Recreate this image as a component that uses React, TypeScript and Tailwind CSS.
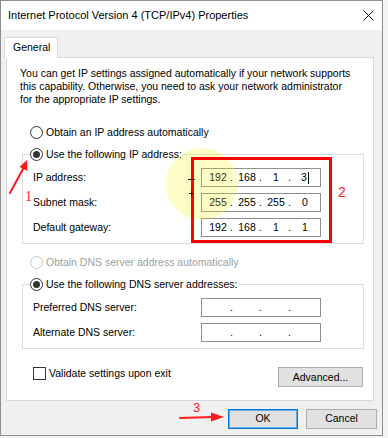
import React from "react";

const FONT = { fontFamily: '"Liberation Sans", Arial, sans-serif' };

function Radio({ checked, disabled }: { checked?: boolean; disabled?: boolean }) {
  return (
    <span
      className={
        disabled
          ? "w-[13px] h-[13px] rounded-full border border-[#c6c6c6] bg-white flex items-center justify-center shrink-0"
          : "w-[13px] h-[13px] rounded-full border border-[#333333] bg-white flex items-center justify-center shrink-0"
      }
    >
      {checked && <span className="w-[7px] h-[7px] rounded-full bg-[#333333]" />}
    </span>
  );
}

function IpField({ parts, cursor }: { parts: string[]; cursor?: boolean }) {
  return (
    <div className="w-[120px] h-[19px] border border-[#8f8f8f] bg-white flex items-center pl-[4px] text-[10.5px] leading-[13px] text-black shrink-0">
      {[0, 1, 2, 3].map((i) => (
        <React.Fragment key={i}>
          <span className="w-[24px] text-center flex justify-center items-center">
            <span>{parts[i] ?? ""}</span>
            {cursor && i === 3 && <span className="inline-block w-px h-[12px] bg-black ml-px" />}
          </span>
          {i < 3 && <span className="w-[5px] text-left">.</span>}
        </React.Fragment>
      ))}
    </div>
  );
}

function Row({ label, children }: { label: string; children: React.ReactNode }) {
  return (
    <div className="flex items-center h-[19px]">
      <span className="w-[168px] shrink-0 whitespace-nowrap">{label}</span>
      {children}
    </div>
  );
}

function Button({ label, primary, w }: { label: string; primary?: boolean; w: string }) {
  return (
    <div
      className={
        (primary
          ? "border border-[#0078d7] shadow-[inset_0_0_0_1px_#6aa8e0] "
          : "border border-[#adadad] ") +
        w +
        " h-[20px] bg-[#e1e1e1] flex items-center justify-center text-[10.5px] text-black"
      }
    >
      {label}
    </div>
  );
}

export default function App() {
  return (
    <div className="relative w-[388px] h-[438px] bg-[#f3f3f3] overflow-hidden text-black" style={FONT}>
      <div className="w-[383px] h-[436px] border border-[#8e8e8e] bg-[#f0f0f0] flex flex-col">
        {/* Title bar */}
        <div className="h-[29px] bg-white flex items-center justify-between pl-[7px] pr-[8px] shrink-0">
          <span className="text-[11px] whitespace-nowrap">Internet Protocol Version 4 (TCP/IPv4) Properties</span>
          <svg width="11" height="11" viewBox="0 0 11 11" className="mt-[-1px]">
            <path d="M0.5 0.5 L10.5 10.5 M10.5 0.5 L0.5 10.5" stroke="#111" strokeWidth="1" fill="none" />
          </svg>
        </div>

        {/* Tab */}
        <div className="mt-[7px] ml-[3px] w-[54px] h-[21px] border border-b-0 border-[#d9d9d9] bg-white relative z-10 -mb-px flex items-center pl-[8px] text-[10.5px]">
          General
        </div>

        {/* Panel */}
        <div className="ml-[5px] w-[368px] h-[344px] border border-[#d9d9d9] bg-white flex flex-col text-[10.5px] leading-[13px] shrink-0">
          <p className="ml-[13px] mt-[9px] whitespace-nowrap">
            You can get IP settings assigned automatically if your network supports
            <br />
            this capability. Otherwise, you need to ask your network administrator
            <br />
            for the appropriate IP settings.
          </p>

          <div className="mt-[20px] ml-[23px] flex items-center gap-[3px] h-[13px]">
            <Radio />
            <span>Obtain an IP address automatically</span>
          </div>

          <fieldset className="mt-[9px] ml-[15px] w-[342px] border border-[#dcdcdc] pl-[10px] pt-[7px] pb-[6px] flex flex-col gap-[6px]">
            <legend className="-ml-[3px] pr-[2px] bg-white">
              <span className="flex items-center gap-[3px] h-[13px]">
                <Radio checked />
                <span>Use the following IP address:</span>
              </span>
            </legend>
            <Row label="IP address:">
              <IpField parts={["192", "168", "1", "3"]} cursor />
            </Row>
            <Row label="Subnet mask:">
              <IpField parts={["255", "255", "255", "0"]} />
            </Row>
            <Row label="Default gateway:">
              <IpField parts={["192", "168", "1", "1"]} />
            </Row>
          </fieldset>

          <div className="mt-[12px] ml-[23px] flex items-center gap-[3px] h-[13px] text-[#a0a0a0]">
            <Radio disabled />
            <span>Obtain DNS server address automatically</span>
          </div>

          <fieldset className="mt-[9px] ml-[15px] w-[342px] border border-[#dcdcdc] pl-[10px] pt-[7px] pb-[6px] flex flex-col gap-[6px]">
            <legend className="-ml-[3px] pr-[2px] bg-white">
              <span className="flex items-center gap-[3px] h-[13px]">
                <Radio checked />
                <span>Use the following DNS server addresses:</span>
              </span>
            </legend>
            <Row label="Preferred DNS server:">
              <IpField parts={[]} />
            </Row>
            <Row label="Alternate DNS server:">
              <IpField parts={[]} />
            </Row>
          </fieldset>

          <div className="mt-[18px] ml-[26px] mr-[10px] flex items-start">
            <span className="w-[13px] h-[13px] border border-[#333333] bg-white shrink-0" />
            <span className="ml-[3px] leading-[13px]">Validate settings upon exit</span>
            <div className="ml-auto">
              <Button label="Advanced..." w="w-[85px]" />
            </div>
          </div>
        </div>

        {/* Bottom buttons */}
        <div className="mt-[8px] flex justify-end gap-[8px] pr-[5px]">
          <Button label="OK" primary w="w-[70px]" />
          <Button label="Cancel" w="w-[71px]" />
        </div>
      </div>

      {/* Annotations overlay */}
      <div className="absolute left-[166px] top-[148px] w-[72px] h-[72px] rounded-full bg-[rgba(240,240,0,0.22)] pointer-events-none" />
      <div className="absolute left-[191px] top-[157px] w-[141px] h-[86px] border-[3px] border-[#ff0000] pointer-events-none" />
      <svg className="absolute left-0 top-0 pointer-events-none" width="388" height="438" viewBox="0 0 388 438">
        <g stroke="#ff1a1a" strokeWidth="2" fill="none" strokeLinecap="round">
          <path d="M10 193 L24 167" />
          <path d="M180 418 L212 417" />
        </g>
        <polygon points="27,160 27.5,171 19.5,167" fill="#ff1a1a" />
        <polygon points="224,417 211,412.5 211,421.5" fill="#ff1a1a" />
        <g stroke="#222" strokeWidth="1">
          <path d="M188 179.5 H195" />
          <path d="M189 193.5 H194 M191.5 191 V196" />
        </g>
      </svg>
      <span className="absolute left-[25px] top-[189px] text-[14px] leading-[16px] text-[#ff1a1a]" style={{ fontFamily: '"Liberation Serif", serif' }}>1</span>
      <span className="absolute left-[338px] top-[184px] text-[14px] leading-[16px] text-[#ff1a1a]">2</span>
      <span className="absolute left-[193px] top-[400px] text-[13px] leading-[15px] text-[#ff1a1a]">3</span>
    </div>
  );
}
